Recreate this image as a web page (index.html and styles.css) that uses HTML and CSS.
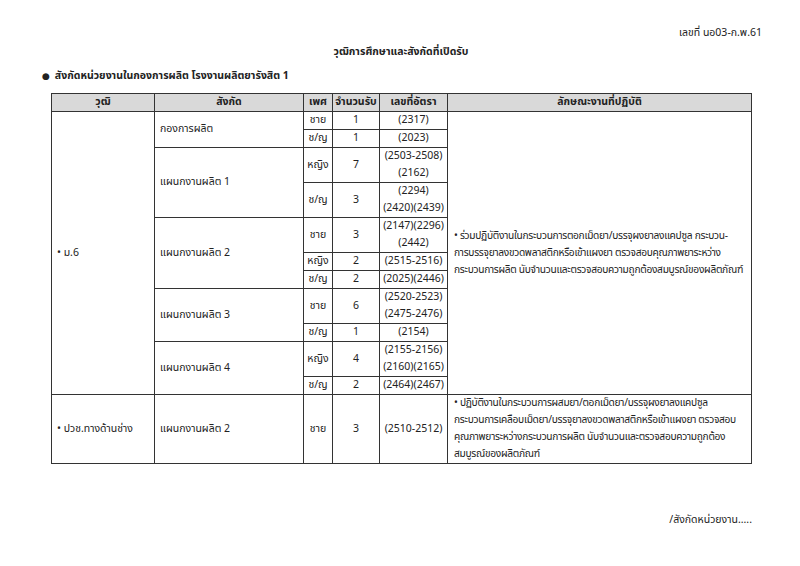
FILE: index.html
```html
<!DOCTYPE html>
<html lang="th">
<head>
<meta charset="utf-8">
<link rel="stylesheet" href="styles.css">
</head>
<body>
<div class="page">
  <div class="docno">เลขที่ นอ03-ก.พ.61</div>
  <div class="title">วุฒิการศึกษาและสังกัดที่เปิดรับ</div>
  <div class="subtitle"><span class="dot">●</span>สังกัดหน่วยงานในกองการผลิต โรงงานผลิตยารังสิต 1</div>
  <table class="grid">
    <colgroup>
      <col class="c1"><col class="c2"><col class="c3"><col class="c4"><col class="c5"><col class="c6">
    </colgroup>
    <thead>
      <tr><th>วุฒิ</th><th>สังกัด</th><th>เพศ</th><th>จำนวนรับ</th><th>เลขที่อัตรา</th><th>ลักษณะงานที่ปฏิบัติ</th></tr>
    </thead>
    <tbody>
      <tr>
        <td rowspan="11" class="left">• ม.6</td>
        <td rowspan="2" class="left">กองการผลิต</td>
        <td>ชาย</td><td>1</td><td>(2317)</td>
        <td rowspan="11" class="task">• ร่วมปฏิบัติงานในกระบวนการตอกเม็ดยา/บรรจุผงยาลงแคปซูล กระบวน-<br>การบรรจุยาลงขวดพลาสติกหรือเข้าแผงยา ตรวจสอบคุณภาพยาระหว่าง<br>กระบวนการผลิต นับจำนวนและตรวจสอบความถูกต้องสมบูรณ์ของผลิตภัณฑ์</td>
      </tr>
      <tr><td>ช/ญ</td><td>1</td><td>(2023)</td></tr>
      <tr>
        <td rowspan="2" class="left">แผนกงานผลิต 1</td>
        <td>หญิง</td><td>7</td><td>(2503-2508)<br>(2162)</td>
      </tr>
      <tr><td>ช/ญ</td><td>3</td><td>(2294)<br>(2420)(2439)</td></tr>
      <tr>
        <td rowspan="3" class="left">แผนกงานผลิต 2</td>
        <td>ชาย</td><td>3</td><td>(2147)(2296)<br>(2442)</td>
      </tr>
      <tr><td>หญิง</td><td>2</td><td>(2515-2516)</td></tr>
      <tr><td>ช/ญ</td><td>2</td><td>(2025)(2446)</td></tr>
      <tr>
        <td rowspan="2" class="left">แผนกงานผลิต 3</td>
        <td>ชาย</td><td>6</td><td>(2520-2523)<br>(2475-2476)</td>
      </tr>
      <tr><td>ช/ญ</td><td>1</td><td>(2154)</td></tr>
      <tr>
        <td rowspan="2" class="left">แผนกงานผลิต 4</td>
        <td>หญิง</td><td>4</td><td>(2155-2156)<br>(2160)(2165)</td>
      </tr>
      <tr><td>ช/ญ</td><td>2</td><td>(2464)(2467)</td></tr>
      <tr>
        <td class="left">• ปวช.ทางด้านช่าง</td>
        <td class="left">แผนกงานผลิต 2</td>
        <td>ชาย</td><td>3</td><td>(2510-2512)</td>
        <td class="task">• ปฏิบัติงานในกระบวนการผสมยา/ตอกเม็ดยา/บรรจุผงยาลงแคปซูล<br>กระบวนการเคลือบเม็ดยา/บรรจุยาลงขวดพลาสติกหรือเข้าแผงยา ตรวจสอบ<br>คุณภาพยาระหว่างกระบวนการผลิต นับจำนวนและตรวจสอบความถูกต้อง<br>สมบูรณ์ของผลิตภัณฑ์</td>
      </tr>
    </tbody>
  </table>
  <div class="footer">/สังกัดหน่วยงาน.....</div>
</div>
</body>
</html>
```

FILE: styles.css
```css
html, body {
  margin: 0;
  padding: 0;
  background: #ffffff;
}
body {
  font-family: Tahoma, "Noto Sans Thai", "Noto Sans", "DejaVu Sans", sans-serif;
  font-size: 10.5px;
  color: #222;
}
.page {
  width: 800px;
  height: 566px;
  box-sizing: border-box;
  padding: 24px 0 0 51px;
}
.docno {
  width: 711px;
  text-align: right;
  line-height: 18px;
}
.title {
  width: 700px;
  text-align: center;
  font-weight: bold;
  line-height: 18px;
  margin-top: 1px;
}
.subtitle {
  font-weight: bold;
  line-height: 18px;
  margin-top: 6px;
  margin-left: -9px;
}
.dot {
  font-size: 9px;
  margin-right: 5px;
}
.grid {
  border-collapse: collapse;
  width: 700px;
  margin-top: 8px;
  table-layout: fixed;
  border: 1px solid #333;
}
.c1 { width: 103px; }
.c2 { width: 149px; }
.c3 { width: 29px; }
.c4 { width: 47px; }
.c5 { width: 68px; }
.c6 { width: 304px; }
.grid th, .grid td {
  border: 1px solid #333;
  padding: 0;
  line-height: 17px;
  text-align: center;
  vertical-align: middle;
}
.grid th {
  background: #d9d9d9;
  font-weight: bold;
  height: 16px;
}
.grid td.left {
  text-align: left;
  padding-left: 5px;
}
.grid td.task {
  text-align: left;
  padding-left: 6px;
  white-space: nowrap;
  overflow: hidden;
  font-size: 10.2px;
  letter-spacing: -0.3px;
}
.footer {
  width: 701px;
  text-align: right;
  margin-top: 47px;
  line-height: 18px;
}
```
